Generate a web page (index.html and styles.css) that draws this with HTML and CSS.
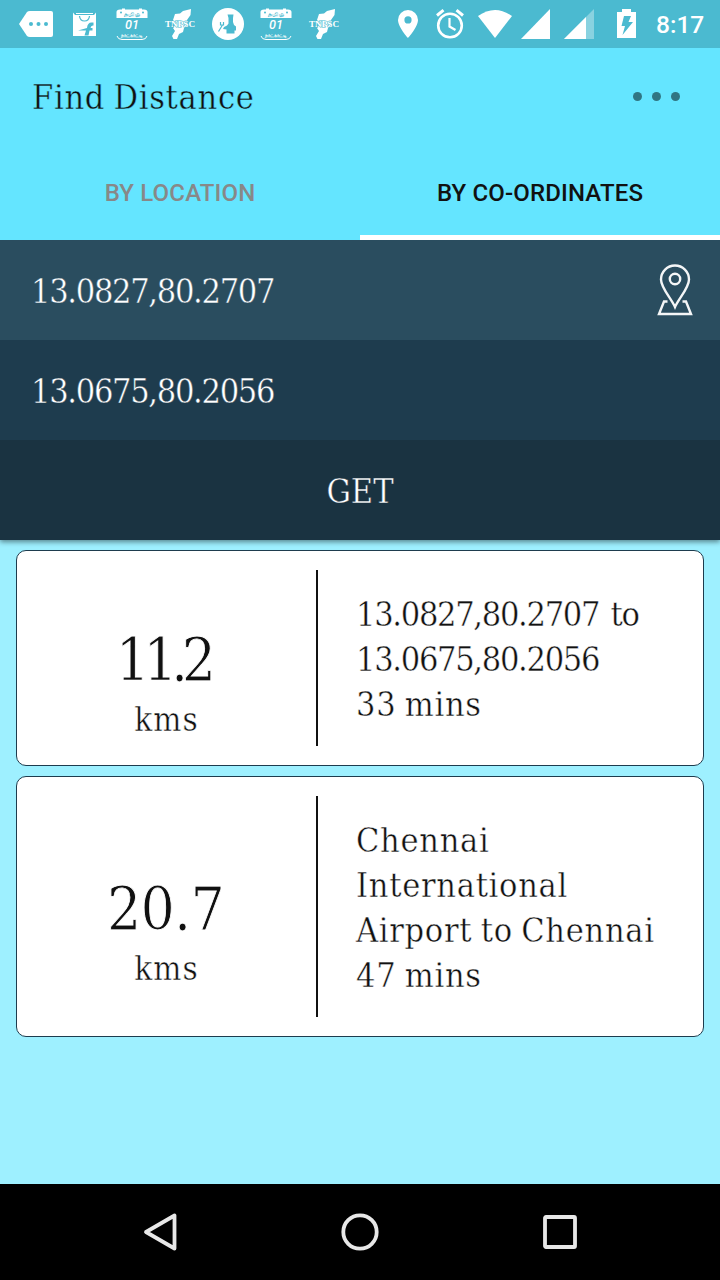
FILE: index.html
```html
<!DOCTYPE html>
<html lang="en">
    <head>
        <meta charset="utf-8">
        <title>Find Distance</title>
        <meta name="viewport" content="width=device-width, initial-scale=1.0">
        <link rel="stylesheet" href="styles.css">
    </head>
    <body>
        <div class="status-bar">
            <svg class="status-icons" width="640" height="48" viewBox="0 0 640 48">
                <defs>
                    <g id="calendar">
                        <path d="M0.500 18V12Q0.500 9.500 4 9.500H6V8.500H9V9.500H23V8.500H26V9.500H28Q31.500 9.500 31.500 12V18Z" fill="#fff"/>
                        <circle cx="5" cy="12.500" r="1" class="cut"/>
                        <circle cx="27" cy="12.500" r="1" class="cut"/>
                        <text x="16" y="16" class="cal-top" textLength="16" lengthAdjust="spacingAndGlyphs">தமிழ்</text>
                        <text x="16" y="29" class="cal-day" textLength="14" lengthAdjust="spacingAndGlyphs">01</text>
                        <text x="16" y="37" class="cal-month" textLength="22" lengthAdjust="spacingAndGlyphs">நாட்காட்டி</text>
                        <path d="M1 36Q2 39.500 6 39.500H26Q30 39.500 31 36" fill="none" stroke="#fff"/>
                    </g>
                    <g id="tnpsc">
                        <path d="M26 9L25.500 15L22 20L23 25L19 28L18 32L14 34L12 39H8.500L7 36L10 31L8 28L10 25L8 20L10 14L15 13.500L18 11Z" fill="#fff"/>
                        <text x="15" y="26.500" class="tnpsc" textLength="30" lengthAdjust="spacingAndGlyphs">TNPSC</text>
                    </g>
                </defs>
                <path d="M19 24L27 12Q28 11 30 11H51Q53 11 53 13V35Q53 37 51 37H30Q28 37 27 36Z" fill="#fff"/>
                <g class="cut">
                    <circle cx="31" cy="24" r="2"/>
                    <circle cx="38.500" cy="24" r="2"/>
                    <circle cx="46" cy="24" r="2"/>
                </g>
                <path d="M73 12.500L75 15H94L96 12.500V36H73Z" fill="#fff"/>
                <path d="M76 13.500H93" stroke="#fff"/>
                <path d="M79.500 16Q80 21 84.500 21Q89 21 89.500 16" class="cut-line"/>
                <path d="M93.500 22.500H91.500Q87.500 22.500 87 28L78 30.500H86L84.500 35.500H88.500L89.500 30.500H92.500V28H90.500Q91 25 93.500 25.500Z" class="cut"/>
                <use href="#calendar" x="116"/>
                <use href="#tnpsc" x="165"/>
                <circle cx="228" cy="24" r="16" fill="#fff"/>
                <path d="M227.500 14.500H233.500L233 18V22L234 25L236 26.500V30.500H234.500V33.500H226.500V29.500L223 29L224 27L227 25.500L228.500 23.500V18Z" class="cut"/>
                <path d="M218.500 31.500L222.500 25M220.500 22V25H223.500V22" class="cut-line"/>
                <use href="#calendar" x="260"/>
                <use href="#tnpsc" x="309"/>
                <path d="M408 10A10 10 0 0 0 398 20C398 27 408 38 408 38S418 27 418 20A10 10 0 0 0 408 10ZM408 16.300A3.600 3.600 0 1 1 408 23.500A3.600 3.600 0 1 1 408 16.300Z" fill="#fff"/>
                <g fill="none" stroke="#fff" stroke-width="2.600">
                    <circle cx="450" cy="25.500" r="11.800"/>
                    <path d="M449.500 18V26.500L455.500 30" stroke-width="2.200"/>
                    <path d="M437 15.500L443.500 10.200M463 15.500L456.500 10.200" stroke-width="3"/>
                </g>
                <path d="M478 16Q495 4 512 16L495 38Z" fill="#fff"/>
                <path d="M521 39L550 9V39Z" fill="#fff"/>
                <path d="M564 39L594 9V39Z" fill="#fff" opacity=".35"/>
                <path d="M564 39L586 17V39Z" fill="#fff"/>
                <path d="M617 12H622V9H631V12H636V38H617Z" fill="#fff"/>
                <path d="M624 16H631L628.500 22H633L622.500 35L625 26H621.500Z" class="cut"/>
            </svg>
            <span class="time">8:17</span>
        </div>

        <div class="toolbar">
            <h1 class="slab title">Find Distance</h1>
            <div class="menu">
                <i></i>
                <i></i>
                <i></i>
            </div>
        </div>
        <div class="tabs">
            <div class="tab">BY LOCATION</div>
            <div class="tab active">BY CO-ORDINATES</div>
        </div>

        <div class="form">
            <div class="field from">
                <span class="slab coords">13.0827,80.2707</span>
                <svg class="pin" width="36" height="52" viewBox="0 0 36 52">
                    <path d="M18 43C14 34 4 24 4 15.500A14 14 0 0 1 32 15.500C32 24 22 34 18 43Z"/>
                    <circle cx="18" cy="15" r="5.200"/>
                    <path d="M10.500 37.500H7L2 50H34L29 37.500H25.500"/>
                </svg>
            </div>
            <div class="field to">
                <span class="slab coords">13.0675,80.2056</span>
            </div>
            <div class="field get">
                <span class="slab">GET</span>
            </div>
        </div>

        <div class="results">
            <div class="card">
                <div class="distance">
                    <div class="slab number">11.2</div>
                    <div class="slab unit">kms</div>
                </div>
                <div class="slab route">
                    <div class="coords">13.0827,80.2707 to</div>
                    <div class="coords">13.0675,80.2056</div>
                    <div>33 mins</div>
                </div>
            </div>
            <div class="card">
                <div class="distance">
                    <div class="slab number wide">20.7</div>
                    <div class="slab unit">kms</div>
                </div>
                <div class="slab route">
                    <div>Chennai</div>
                    <div>International</div>
                    <div>Airport to Chennai</div>
                    <div>47 mins</div>
                </div>
            </div>
        </div>

        <div class="nav-bar">
            <svg width="40" height="40" viewBox="0 0 40 40"><path d="M34.500 3.500V36.500L6 20Z"/></svg>
            <svg width="40" height="40" viewBox="0 0 40 40"><circle cx="20" cy="20" r="16.700"/></svg>
            <svg width="40" height="40" viewBox="0 0 40 40"><rect x="5" y="5" width="30" height="30" rx="1"/></svg>
        </div>
    </body>
</html>
```
FILE: styles.css
```css
* {
    box-sizing: border-box;
}

body {
    margin: 0;
    width: 720px;
    height: 1280px;
    overflow: hidden;
    display: flex;
    flex-direction: column;
    background-color: #9ef0ff;
    color: #111;
    font-family: Roboto, sans-serif;
}

.slab {
    padding-top: 2px;
    font-family: "Roboto Slab", "DejaVu Serif Condensed", "DejaVu Serif", serif;
    font-stretch: condensed;
    font-weight: 300;
    font-size: 34px;
    line-height: 45px;
    white-space: nowrap;
    -webkit-text-stroke: 0.4px var(--bg);
}

.status-bar {
    height: 48px;
    display: flex;
    align-items: center;
    background-color: #4bbad0;
    color: #fff;
}

.status-icons {
    flex: none;
}

.cut {
    fill: #4bbad0;
}

.cut-line {
    fill: none;
    stroke: #4bbad0;
    stroke-width: 1.2;
}

.cal-top, .cal-day, .cal-month, .tnpsc {
    text-anchor: middle;
    font-family: Roboto, "Noto Sans", sans-serif;
    font-weight: bold;
}

.cal-top {
    font-size: 6px;
    fill: #4bbad0;
}

.cal-day {
    font-size: 13px;
    font-weight: 500;
    font-style: italic;
    fill: #fff;
}

.cal-month {
    font-size: 6px;
    fill: #fff;
}

.tnpsc {
    font-family: "Liberation Serif", serif;
    font-size: 9px;
    fill: #fff;
    stroke: #4bbad0;
    stroke-width: 1px;
    paint-order: stroke;
}

.time {
    margin-left: 16px;
    font-size: 24.5px;
    font-weight: 500;
}

.toolbar {
    --bg: #64e5ff;
    height: 96px;
    padding: 0 40px 0 32px;
    display: flex;
    align-items: center;
    justify-content: space-between;
    background-color: #64e5ff;
}

.title {
    margin: 0;
    letter-spacing: 0.7px;
    word-spacing: -2px;
}

.menu {
    display: flex;
    gap: 10px;
}

.menu i {
    width: 9px;
    height: 9px;
    border-radius: 50%;
    background-color: #307583;
}

.tabs {
    height: 96px;
    display: flex;
    background-color: #64e5ff;
}

.tab {
    flex: 1;
    padding-top: 3px;
    border-bottom: 5px solid transparent;
    line-height: 93px;
    text-align: center;
    font-size: 24px;
    font-weight: 500;
    letter-spacing: 0.15px;
    color: #888;
}

.tab.active {
    color: #111;
    border-color: #fff;
}

.form {
    box-shadow: 0 2px 5px rgba(0, 0, 0, 0.45);
    clip-path: inset(0 0 -10px 0);
    color: #fff;
}

.field {
    height: 100px;
    padding: 0 27px 0 31px;
    display: flex;
    align-items: center;
    justify-content: space-between;
    background-color: var(--bg);
}

.from {
    --bg: #2a4d5f;
}

.to {
    --bg: #1e3c4e;
}

.get {
    --bg: #1a3341;
    justify-content: center;
    padding: 0;
}

.coords {
    letter-spacing: -1.3px;
    word-spacing: 3px;
}

.pin {
    fill: none;
    stroke: #f4f6f7;
    stroke-width: 2.4;
}

.results {
    flex: 1;
    padding: 10px 16px;
    display: flex;
    flex-direction: column;
    gap: 10px;
}

.card {
    --bg: #fff;
    min-height: 216px;
    padding: 19px 20px;
    display: flex;
    border: 1px solid #1e3c4e;
    border-radius: 10px;
    background-color: #fff;
}

.card + .card {
    min-height: 261px;
}

.distance {
    width: 281px;
    padding: 54px 20px 0 0;
    display: flex;
    flex-direction: column;
    justify-content: center;
    border-right: 2px solid #111;
    text-align: center;
}

.number {
    padding: 0 8px 0 0;
    font-size: 60px;
    line-height: 60px;
    letter-spacing: -6.5px;
    -webkit-text-stroke-width: 0.8px;
}

.number.wide {
    padding-right: 2px;
    letter-spacing: -0.8px;
}

.unit {
    margin-top: 10px;
    padding: 0;
    font-size: 33px;
    line-height: 40px;
    letter-spacing: 1px;
}

.route {
    padding-left: 38px;
    display: flex;
    flex-direction: column;
    justify-content: center;
    letter-spacing: 0.7px;
    word-spacing: -2px;
}

.nav-bar {
    height: 96px;
    display: flex;
    align-items: center;
    justify-content: center;
    gap: 160px;
    background-color: #000;
}

.nav-bar svg {
    fill: none;
    stroke: #e8e8e8;
    stroke-width: 3.8;
    stroke-linejoin: round;
}
```
